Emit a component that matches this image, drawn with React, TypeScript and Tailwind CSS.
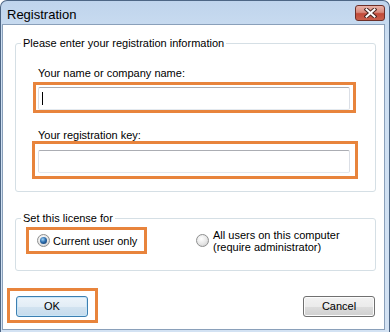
const orange = 'border-[3px] border-[#e8843c]';

const TextBox = ({ caret }: { caret?: boolean }) => (
  <div className="flex h-[23px] w-full items-center rounded-[2px] border border-[#abadb3] border-x-[#dbdfe6] border-b-[#e3e9ef] bg-white pl-[3px]">
    {caret && <div className="h-[13px] w-px bg-black" />}
  </div>
);

const Radio = ({ checked }: { checked?: boolean }) => (
  <div className="flex h-[13px] w-[13px] shrink-0 items-center justify-center rounded-full border border-[#8e8f8f] bg-[radial-gradient(circle_at_40%_35%,#ffffff_0%,#e6e6e6_55%,#c6c6c6_100%)]">
    {checked && (
      <div className="h-[7px] w-[7px] rounded-full bg-[radial-gradient(circle_at_40%_35%,#9fd3f7_0%,#2d6eae_45%,#0b2c5a_100%)]" />
    )}
  </div>
);

const CloseButton = () => (
  <div className="flex h-[16px] w-[30px] items-center justify-center rounded-[3px] border border-[#6d2f28] bg-[linear-gradient(to_bottom,#e9b2a8_0%,#d98a7c_45%,#c24a38_55%,#c9604c_100%)]">
    <svg width="13" height="10" viewBox="0 0 13 10">
      <path d="M2.5 1.5 L10.5 8.5 M10.5 1.5 L2.5 8.5" stroke="#4a2620" strokeWidth="4" strokeLinecap="square" />
      <path d="M2.5 1.5 L10.5 8.5 M10.5 1.5 L2.5 8.5" stroke="#ffffff" strokeWidth="2" strokeLinecap="square" />
    </svg>
  </div>
);

const Button = ({ label, primary }: { label: string; primary?: boolean }) => (
  <div
    className={`flex h-[21px] w-[72px] items-center justify-center rounded-[3px] border ${
      primary
        ? 'border-[#3c7fb1] bg-[linear-gradient(to_bottom,#edf4fa_0%,#e2edf6_50%,#d2e3f0_50%,#c6dbec_100%)] shadow-[inset_0_0_0_1px_#c9e6f8]'
        : 'border-[#707070] bg-[linear-gradient(to_bottom,#f2f2f2_0%,#ebebeb_50%,#dddddd_50%,#cfcfcf_100%)] shadow-[inset_0_0_0_1px_#fcfcfc]'
    }`}
  >
    {label}
  </div>
);

export default function App() {
  return (
    <div className="h-[332px] w-[390px] overflow-hidden bg-white font-['Liberation_Sans',Arial,sans-serif] text-[11px] text-black">
      <div className="flex h-full flex-col rounded-t-[7px] border border-b-0 border-[#4d6685] bg-[linear-gradient(to_bottom,#bfd4ec_0%,#cddff2_40px,#d3e2f3_100%)]">
        {/* title bar */}
        <div className="flex h-[23px] shrink-0 items-center justify-between pl-[6px] pr-[4px]">
          <span className="pt-[3px] text-[13px] leading-none">Registration</span>
          <CloseButton />
        </div>

        {/* client area */}
        <div className="mb-[2px] ml-px flex w-[383px] flex-1 flex-col border border-[#8aa0ba] bg-white">
          <fieldset className="ml-[12px] mt-[11px] w-[361px] rounded-[3px] border border-[#d5dfe5]">
            <legend className="ml-[5px] px-[2px] leading-[14px]">Please enter your registration information</legend>
            <div className="ml-[17px] flex flex-col pb-[12px]">
              <div className="ml-[5px] mt-[16px] leading-[14px]">Your name or company name:</div>
              <div className={`mt-[2px] w-[323px] ${orange} pl-[2px] pr-[3px] pt-[2px]`}>
                <TextBox caret />
              </div>
              <div className="ml-[5px] mt-[15px] leading-[14px]">Your registration key:</div>
              <div className={`-ml-px -mt-px w-[326px] ${orange} pb-[3px] pl-[3px] pr-[5px] pt-[6px]`}>
                <TextBox />
              </div>
            </div>
          </fieldset>

          <fieldset className="ml-[12px] mt-[19px] w-[361px] rounded-[3px] border border-[#d5dfe5]">
            <legend className="ml-[5px] px-[2px] leading-[14px]">Set this license for</legend>
            <div className="ml-[10px] mt-[2px] flex items-center pb-[16px]">
              <div className={`flex h-[27px] w-[121px] items-center gap-[3px] ${orange} pl-[8px]`}>
                <Radio checked />
                <span className="leading-[14px]">Current user only</span>
              </div>
              <div className="ml-[49px] flex items-center gap-[4px]">
                <Radio />
                <div className="leading-[12px]">
                  All users on this computer
                  <br />
                  (require administrator)
                </div>
              </div>
            </div>
          </fieldset>

          <div className="mt-[17px] flex items-start justify-between pl-[4px] pr-[9px]">
            <div className={`${orange} pb-[3px] pl-[6px] pr-[7px] pt-[5px]`}>
              <Button label="OK" primary />
            </div>
            <div className="mt-[8px]">
              <Button label="Cancel" />
            </div>
          </div>
        </div>
      </div>
    </div>
  );
}
